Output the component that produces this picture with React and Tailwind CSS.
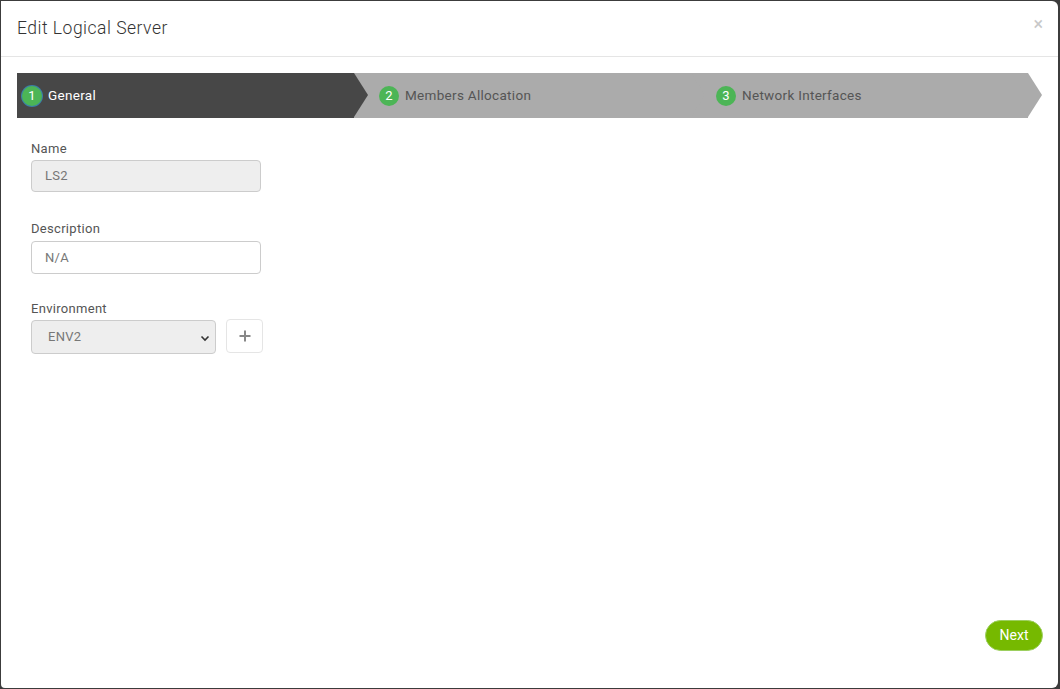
import React from 'react';

const steps = [
  { n: 1, label: 'General' },
  { n: 2, label: 'Members Allocation' },
  { n: 3, label: 'Network Interfaces' },
];

function Step({ n, label, active, first }) {
  const bg = active ? 'bg-[#474747]' : 'bg-[#ababab]';
  const tipColor = active ? 'border-l-[#474747]' : 'border-l-[#ababab]';
  return (
    <div className={`relative flex h-[45px] w-[337px] items-center ${bg} ${first ? 'pl-[5px]' : 'pl-[25px]'}`}>
      <span
        className={`flex h-[20px] w-[20px] items-center justify-center rounded-full bg-[#4cb556] text-[13px] text-white ${
          active ? 'ring-1 ring-[#3b7fa6]' : ''
        }`}
      >
        {n}
      </span>
      <span className={`ml-[6px] text-[13.5px] tracking-[0.3px] ${active ? 'text-white' : 'text-[#555]'}`}>{label}</span>
      {/* chevron tip pointing into the next step */}
      <span
        className={`absolute top-0 right-[-14px] z-10 h-0 w-0 border-y-[22.5px] border-l-[14px] border-y-transparent ${tipColor}`}
      />
    </div>
  );
}

export default function App() {
  return (
    <div className="h-[689px] w-[1060px] bg-[#3c3c3c] p-[1px] pr-[2px]" style={{ fontFamily: 'Roboto, "Noto Sans", sans-serif' }}>
      <div className="flex h-[687px] flex-col rounded-r-[6px] rounded-bl-[4px] bg-white">
        <div className="flex h-[56px] items-center justify-between border-b border-[#e5e5e5] pl-[16px] pr-[15px]">
          <h1 className="text-[17.5px] font-light tracking-[0.5px] text-[#333]">Edit Logical Server</h1>
          <span className="mb-[10px] text-[18px] leading-none text-[#c8c8c8]">×</span>
        </div>

        <div className="mt-[16px] flex pl-[16px]">
          {steps.map((s, i) => (
            <Step key={s.n} {...s} active={i === 0} first={i === 0} />
          ))}
        </div>

        <div className="flex flex-1 flex-col pl-[30px] pr-[15px] pt-[21px] text-[13px] tracking-[0.3px]">
          <label className="text-[#555]">Name</label>
          <input
            readOnly
            value="LS2"
            className="mt-[1px] h-[32px] w-[230px] rounded-[4px] border border-[#ccc] bg-[#eee] px-[13px] text-[13px] tracking-[0.3px] text-[#777] outline-none"
          />

          <label className="mt-[27px] text-[#555]">Description</label>
          <input
            readOnly
            value="N/A"
            className="mt-[3px] h-[33px] w-[230px] rounded-[4px] border border-[#ccc] bg-white px-[13px] text-[13px] tracking-[0.3px] text-[#777] outline-none"
          />

          <label className="mt-[25px] text-[#555]">Environment</label>
          <div className="flex items-center gap-[10px]">
            <div className="relative flex h-[34px] w-[185px] items-center rounded-[4px] border border-[#ccc] bg-[#eee] pl-[16px] text-[#777]">
              ENV2
              <svg className="absolute right-[5px] top-[12px]" width="10" height="10" viewBox="0 0 10 10">
                <path d="M1.5 3.5 L5 7 L8.5 3.5" fill="none" stroke="#333" strokeWidth="1.6" />
              </svg>
            </div>
            <button className="mb-[2px] flex h-[34px] w-[37px] items-center justify-center rounded-[4px] border border-[#e5e5e5] bg-white">
              <svg width="12" height="12" viewBox="0 0 12 12">
                <path d="M6 0.5 V11.5 M0.5 6 H11.5" stroke="#888" strokeWidth="2" />
              </svg>
            </button>
          </div>

          <div className="mt-auto mb-[37px] flex justify-end">
            <button className="h-[31px] w-[58px] rounded-full border border-[#9ccf5f] bg-[#76b900] text-[14px] tracking-normal text-white">
              Next
            </button>
          </div>
        </div>
      </div>
    </div>
  );
}
